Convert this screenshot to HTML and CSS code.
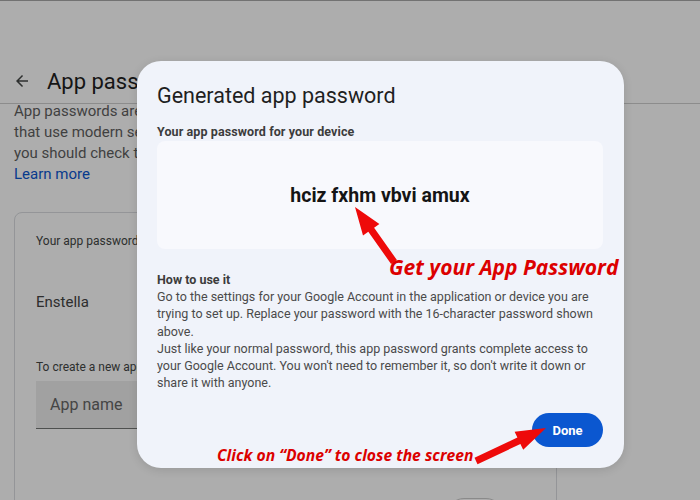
FILE: index.html
```html
<!DOCTYPE html>
<html lang="en">
<head>
    <meta charset="UTF-8">
    <meta name="viewport" content="width=device-width, initial-scale=1.0">
    <title>App passwords</title>
    <link rel="stylesheet" href="styles.css">
</head>
<body>
    <div class="page">
        <header class="topbar">
            <svg class="back" width="18" height="18" viewBox="0 0 24 24"><path d="M20 11H7.83l5.59-5.59L12 4l-8 8 8 8 1.41-1.41L7.83 13H20v-2z" fill="#444746"/></svg>
            <h1>App passwords</h1>
        </header>

        <p class="intro">
            App passwords are less secure than using up-to-date apps and services<br>
            that use modern security standards. Before you create an app password,<br>
            you should check to see if your app needs this in order to sign in.<br>
            <a href="#">Learn more</a>
        </p>

        <div class="card">
            <div class="label">Your app passwords</div>
            <div class="app-row">Enstella</div>
            <div class="label create">To create a new app specific password, type a name for it below...</div>
            <div class="field">App name</div>
            <div class="create-btn"></div>
        </div>
    </div>

    <div class="scrim"></div>

    <div class="dialog">
        <h2>Generated app password</h2>
        <div class="sub">Your app password for your device</div>
        <div class="pw-box">hciz fxhm vbvi amux</div>
        <div class="howto">How to use it</div>
        <p class="help">Go to the settings for your Google Account in the application or device you are<br>trying to set up. Replace your password with the 16-character password shown<br>above.</p>
        <p class="help">Just like your normal password, this app password grants complete access to<br>your Google Account. You won't need to remember it, so don't write it down or<br>share it with anyone.</p>
        <div class="actions">
            <button class="done">Done</button>
        </div>
    </div>

    <!-- red notes on top -->
    <div class="note note-pw">Get your App Password</div>
    <div class="note note-done">Click on “Done” to close the screen</div>
    <svg class="arrows" width="700" height="500" viewBox="0 0 700 500">
        <polygon points="355,207 379.4,224 374.1,227.8 396.9,260 391.1,264 368.3,231.8 363,235.6" fill="#ee0a0a"/>
        <polygon points="546,428 514.6,431.8 517.4,437.6 474.5,457.8 477.5,464.2 520.4,444 523.2,449.8" fill="#ee0a0a"/>
    </svg>
</body>
</html>
```

FILE: styles.css
```css
body {
    margin: 0;
    font-family: Roboto, "Noto Sans", Arial, sans-serif;
    background: #fff;
    width: 700px;
    height: 500px;
    overflow: hidden;
    position: relative;
}
.page {
    border-top: 1px solid #a8a8a8;
    height: 499px;
    overflow: hidden;
}
.topbar {
    position: relative;
    z-index: 1;
    background: #fff;
    height: 103px;
    box-sizing: border-box;
    padding: 58px 14px 0;
    display: flex;
    align-items: center;
    border-bottom: 1px solid #cfcfcf;
}
.back {
    margin-left: -1px;
}
.topbar h1 {
    margin: 0 0 0 16px;
    font-size: 22px;
    font-weight: 400;
    color: #1f1f1f;
}
.intro {
    margin: -3px 14px 0;
    font-size: 15px;
    line-height: 21px;
    color: #5f5f5f;
    white-space: nowrap;
}
.intro a {
    color: #0b57d0;
    text-decoration: none;
}
.card {
    margin: 27px 0 0 14px;
    width: 543px;
    box-sizing: border-box;
    border: 1px solid #dadce0;
    border-radius: 8px;
    padding: 20px 21px 0;
    height: 320px;
}
.label {
    font-size: 12px;
    line-height: 16px;
    color: #444746;
}
.app-row {
    margin-top: 43px;
    font-size: 15px;
    line-height: 20px;
    color: #444;
}
.create {
    margin-top: 47px;
}
.field {
    margin-top: 6px;
    height: 48px;
    box-sizing: border-box;
    background: #eeeeee;
    border-bottom: 1px solid #747775;
    padding: 14px 14px 0;
    font-size: 16px;
    color: #666;
}
.create-btn {
    margin: 69px 31px 0 auto;
    width: 58px;
    height: 36px;
    box-sizing: border-box;
    border: 1px solid #ccc;
    border-radius: 18px;
    background: #fff;
}

.scrim {
    position: absolute;
    inset: 0;
    z-index: 2;
    background: rgba(0, 0, 0, 0.32);
}

/* dialog */
.dialog {
    position: absolute;
    z-index: 3;
    left: 137px;
    top: 61px;
    width: 487px;
    height: 407px;
    box-sizing: border-box;
    padding: 21px 21px 21px 20px;
    background: #f0f3fa;
    border-radius: 24px;
    box-shadow: 0 2px 10px rgba(0, 0, 0, 0.12);
    display: flex;
    flex-direction: column;
}
.dialog h2 {
    margin: 0;
    font-size: 21.5px;
    line-height: 28px;
    font-weight: 400;
    color: #1f1f1f;
}
.sub {
    margin-top: 14px;
    font-size: 12.5px;
    line-height: 16px;
    font-weight: 700;
    letter-spacing: 0.1px;
    color: #3c3c3c;
}
.pw-box {
    margin-top: 1px;
    height: 108px;
    flex-shrink: 0;
    background: #f8f9fd;
    border-radius: 8px;
    display: flex;
    align-items: center;
    justify-content: center;
    font-size: 19.5px;
    font-weight: 700;
    color: #151515;
}
.howto {
    margin-top: 22px;
    font-size: 12.5px;
    line-height: 17px;
    font-weight: 700;
    color: #3c3c3c;
}
.help {
    margin: 0;
    font-size: 12.5px;
    line-height: 17.3px;
    white-space: nowrap;
    color: #4a4a4a;
}
.actions {
    margin-top: auto;
    display: flex;
    justify-content: flex-end;
}
.done {
    width: 71px;
    height: 34px;
    border: none;
    border-radius: 17px;
    background: #0b57d0;
    color: #fff;
    font-family: inherit;
    font-size: 13px;
    font-weight: 700;
}

/* annotations */
.note {
    position: absolute;
    z-index: 4;
    font-family: "Open Sans", "Liberation Sans", sans-serif;
    font-style: italic;
    font-weight: 700;
    color: #dc0000;
    line-height: 1;
    white-space: nowrap;
}
.note-pw {
    left: 389px;
    top: 257px;
    font-size: 21px;
}
.note-done {
    left: 217px;
    top: 448px;
    font-size: 15.7px;
}
.arrows {
    position: absolute;
    z-index: 4;
    left: 0;
    top: 0;
}
```
